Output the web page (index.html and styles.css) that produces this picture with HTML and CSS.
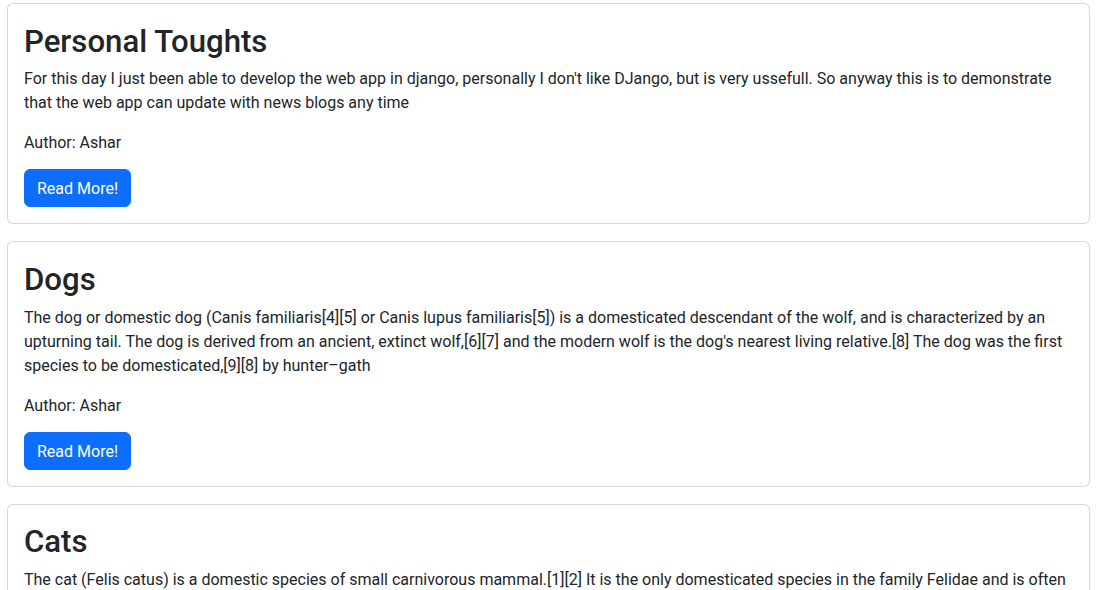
FILE: index.html
```html
<!DOCTYPE html>
<html lang="en">
<head>
<meta charset="utf-8">
<title>Blog</title>
<link rel="stylesheet" href="styles.css">
</head>
<body>
<main class="posts">
  <article class="card">
    <div class="card-body">
      <h2 class="card-title">Personal Toughts</h2>
      <p class="card-text">For this day I just been able to develop the web app in django, personally I don't like DJango, but is very ussefull. So anyway this is to demonstrate that the web app can update with news blogs any time</p>
      <p class="card-text">Author: Ashar</p>
      <a class="btn" href="#">Read More!</a>
    </div>
  </article>
  <article class="card">
    <div class="card-body">
      <h2 class="card-title">Dogs</h2>
      <p class="card-text">The dog or domestic dog (Canis familiaris[4][5] or Canis lupus familiaris[5]) is a domesticated descendant of the wolf, and is characterized by an upturning tail. The dog is derived from an ancient, extinct wolf,[6][7] and the modern wolf is the dog's nearest living relative.[8] The dog was the first species to be domesticated,[9][8] by hunter–gath</p>
      <p class="card-text">Author: Ashar</p>
      <a class="btn" href="#">Read More!</a>
    </div>
  </article>
  <article class="card">
    <div class="card-body">
      <h2 class="card-title">Cats</h2>
      <p class="card-text">The cat (Felis catus) is a domestic species of small carnivorous mammal.[1][2] It is the only domesticated species in the family Felidae and is often referred to as the domestic cat to distinguish it from the wild members of the family.[4] A cat can either be a house cat, a farm cat, or a feral cat</p>
      <p class="card-text">Author: Ashar</p>
      <a class="btn" href="#">Read More!</a>
    </div>
  </article>
</main>
</body>
</html>
```
FILE: styles.css
```css
html, body {
  margin: 0;
  padding: 0;
  background: #fff;
}
body {
  font-family: Roboto, "Liberation Sans", sans-serif;
  font-size: 16px;
  line-height: 1.5;
  color: #212529;
}
.posts {
  display: flex;
  flex-direction: column;
  gap: 17px;
  padding: 3px 16px 0 7px;
}
.card {
  border: 1px solid rgba(0, 0, 0, 0.16);
  border-radius: 6px;
  background: #fff;
}
.card-body {
  padding: 16px;
}
.card-title {
  margin: 0 0 5.5px;
  padding-top: 2.5px;
  font-size: 31.15px;
  line-height: 1.2;
  font-weight: 500;
}
.card-text {
  margin: 0 0 14px;
  padding-top: 2px;
}
.btn {
  display: inline-block;
  padding: 7px 12px 5px;
  font-size: 16px;
  line-height: 24px;
  color: #fff;
  background: #0d6efd;
  border: 1px solid #0d6efd;
  border-radius: 6px;
  text-decoration: none;
}
```
